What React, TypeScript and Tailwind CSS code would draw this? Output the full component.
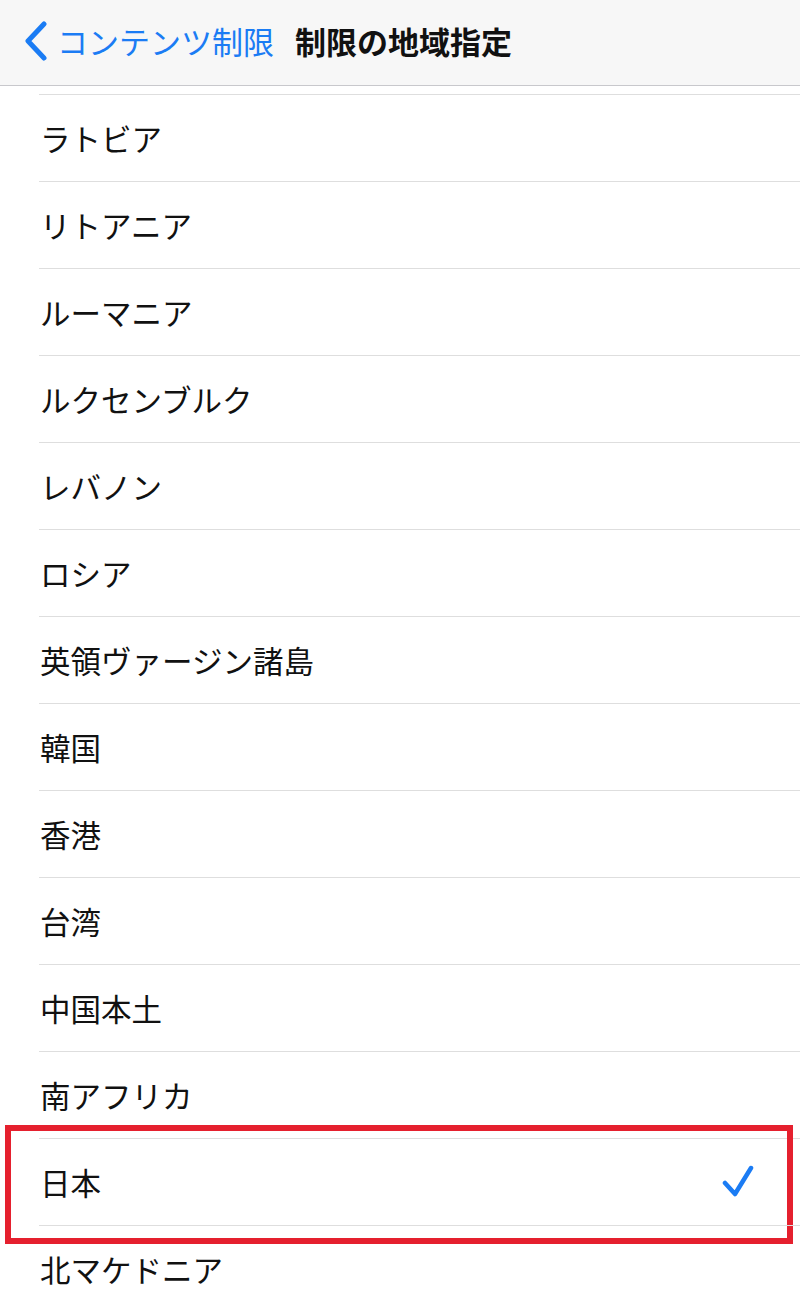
const regions = [
  "ラトビア",
  "リトアニア",
  "ルーマニア",
  "ルクセンブルク",
  "レバノン",
  "ロシア",
  "英領ヴァージン諸島",
  "韓国",
  "香港",
  "台湾",
  "中国本土",
  "南アフリカ",
  "日本",
  "北マケドニア",
];

const selected = "日本";

const App = () => {
  return (
    <div
      className="w-[800px] h-[1303px] overflow-hidden bg-white text-black"
      style={{ fontFamily: '"Noto Sans CJK JP", "Noto Sans", sans-serif' }}
    >
      {/* nav bar */}
      <div className="h-[86px] bg-[#f7f7f7] border-b border-[#c8c8cc] flex items-center pb-[4px]">
        <div className="flex items-center pl-[23px] text-[#1b7cf4]">
          <svg width="26" height="40" viewBox="0 0 26 40" fill="none">
            <path
              d="M21 3 L5 20 L21 37"
              stroke="#1b7cf4"
              strokeWidth="5"
              strokeLinecap="round"
              strokeLinejoin="round"
            />
          </svg>
          <span className="ml-[8px] text-[31px] leading-none">コンテンツ制限</span>
        </div>
        <span className="ml-[21px] text-[31px] leading-none font-bold text-[#111]">
          制限の地域指定
        </span>
      </div>

      <div className="h-[8px]" />

      {regions.map((name) => (
        <div key={name} className="relative">
          <div className="ml-[39px] h-[87px] border-t border-[#dedede] flex items-center justify-between pr-[46px]">
            <span className="text-[30.5px] leading-none ml-[1px] text-[#111]">{name}</span>
            {name === selected && (
              <svg width="32" height="34" viewBox="0 0 32 34" fill="none">
                <path
                  d="M3 18 L13 29 L29 3"
                  stroke="#1b7cf4"
                  strokeWidth="4.5"
                  strokeLinecap="round"
                  strokeLinejoin="round"
                />
              </svg>
            )}
          </div>
          {name === selected && (
            <div className="absolute left-[5px] top-[-13px] w-[788px] h-[119px] border-[6px] border-[#e5202e] pointer-events-none" />
          )}
        </div>
      ))}
    </div>
  );
};

export default App;
